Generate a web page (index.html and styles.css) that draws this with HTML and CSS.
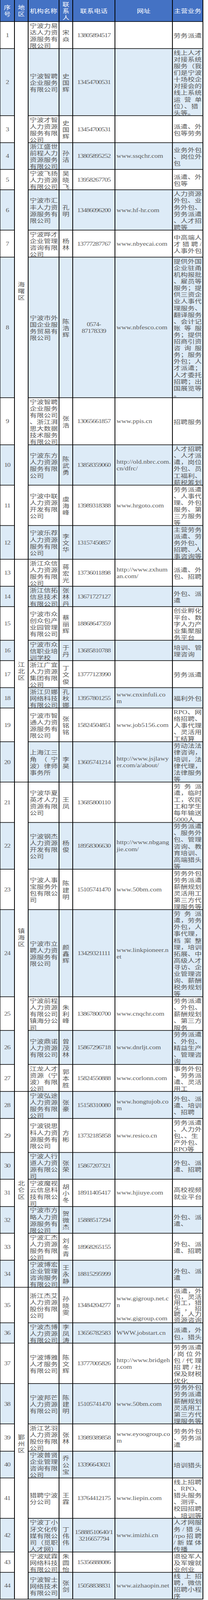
FILE: index.html
```html
<!DOCTYPE html>
<html lang="zh-CN">
<head>
<meta charset="utf-8">
<title>人力资源服务机构名录</title>
<link rel="stylesheet" href="styles.css">
</head>
<body>
<div class="frame">
<div class="sheet">
  <div class="row hd">
    <div class="c"><p>序<br>号</p></div>
    <div class="c"><p>地<br>区</p></div>
    <div class="c"><p>机构名称</p></div>
    <div class="c"><p>联<br>系<br>人</p></div>
    <div class="c"><p>联系电话</p></div>
    <div class="c"><p>网址</p></div>
    <div class="c"><p>主营业务</p></div>
  </div>

  <div class="row">
    <div class="c n"><p>1</p></div>
    <div class="c rg g12"><p>海<br>曙<br>区</p></div>
    <div class="c o"><p>宁波力易<br>达人力资<br>源服务有<br>限公司</p></div>
    <div class="c p"><p>宋<br>焱</p></div>
    <div class="c t"><p>13805894517</p></div>
    <div class="c u"><p></p></div>
    <div class="c b"><p>劳务派遣</p></div>
  </div>
  <div class="row alt">
    <div class="c n"><p>2</p></div>
    <div class="c o"><p>宁波智聘<br>企业服务<br>有限公司</p></div>
    <div class="c p"><p>史<br>国<br>辉</p></div>
    <div class="c t"><p>13454700531</p></div>
    <div class="c u"><p></p></div>
    <div class="c b"><p>线上人才<br>对接系统<br>服务（我<br>们是宁波<br>十场校企<br>对接会的<br>线上系统<span class="j">运营单</span>位）、猎<br>头等。</p></div>
  </div>
  <div class="row">
    <div class="c n"><p>3</p></div>
    <div class="c o"><p>宁波才智<br>人力资源<br>服务有限<br>公司</p></div>
    <div class="c p"><p>史<br>国<br>辉</p></div>
    <div class="c t"><p>13454700531</p></div>
    <div class="c u"><p></p></div>
    <div class="c b"><p>派遣、外<br>包等劳务</p></div>
  </div>
  <div class="row alt">
    <div class="c n"><p>4</p></div>
    <div class="c o"><p>浙江盛世<br>前程人力<br>资源服务<br>有限公司</p></div>
    <div class="c p"><p>孙<br>洁</p></div>
    <div class="c t"><p>13805895252</p></div>
    <div class="c u"><p>www.ssqchr.com</p></div>
    <div class="c b"><p>业务外包<br>、岗位外<br>包</p></div>
  </div>
  <div class="row">
    <div class="c n"><p>5</p></div>
    <div class="c o"><p>宁波飞扬<br>人力资源<br>有限公司</p></div>
    <div class="c p"><p>吴<br>晓<br>飞</p></div>
    <div class="c t"><p>13958267705</p></div>
    <div class="c u"><p></p></div>
    <div class="c b"><p>派遣、外<br>包等</p></div>
  </div>
  <div class="row alt">
    <div class="c n"><p>6</p></div>
    <div class="c o"><p>宁波市汇<br>丰人力资<br>源服务有<br>限公司</p></div>
    <div class="c p"><p>孔<br>明</p></div>
    <div class="c t"><p>13486096200</p></div>
    <div class="c u"><p>www.hf-hr.com</p></div>
    <div class="c b"><p>人力资源<br>外包、业<br>务外包、<br>劳务派遣<br>、人才招<br>聘等</p></div>
  </div>
  <div class="row">
    <div class="c n"><p>7</p></div>
    <div class="c o"><p>宁波晔才<br>企业管理<br>咨询有限<br>公司</p></div>
    <div class="c p"><p>杨<br>林</p></div>
    <div class="c t"><p>13777287767</p></div>
    <div class="c u"><p>www.nbyecai.com</p></div>
    <div class="c b"><p>中高端人<span class="j">才猎聘<span class="lt">/</span></span>人事外包</p></div>
  </div>
  <div class="row alt">
    <div class="c n"><p>8</p></div>
    <div class="c o"><p>宁波市外<br>国企业服<br>务贸易有<br>限公司</p></div>
    <div class="c p"><p>陈<br>浩<br>辉</p></div>
    <div class="c t"><p>0574-<br>87178339</p></div>
    <div class="c u"><p>www.nbfesco.com</p></div>
    <div class="c b"><p>提供外国<br>企业驻甬<br>机构报批<br>、雇员等<br>服务；提<br>供三资企<br>业人事代<br>理服务、<br>翻译服务<br>、会计记<span class="j">账等服</span>务；提供<br>招商引资<span class="j">咨询服</span>务；服务<br>外包；人<br>才派遣；<br>人才委托<br>招聘；出<br>国展览等<br>。</p></div>
  </div>
  <div class="row">
    <div class="c n"><p>9</p></div>
    <div class="c o"><p>宁波智聘<br>企业服务<br>有限公司<br>、浙江湃<br>思大数据<br>技术服务<br>有限公司</p></div>
    <div class="c p"><p>张<br>浩</p></div>
    <div class="c t"><p>13065661857</p></div>
    <div class="c u"><p>www.ppis.cn</p></div>
    <div class="c b"><p>招聘服务</p></div>
  </div>
  <div class="row alt">
    <div class="c n"><p>10</p></div>
    <div class="c o"><p>宁波东方<br>人力资源<br>服务有限<br>公司</p></div>
    <div class="c p"><p>陈<br>武<br>勇</p></div>
    <div class="c t"><p>13858359060</p></div>
    <div class="c u"><p>http://old.nbrc.com.<br>cn/dfrc/</p></div>
    <div class="c b"><p>人才招聘<br>、人才派<br>遣，岗位<br>外包、员<br>工福利、<br>薪税筹划</p></div>
  </div>
  <div class="row">
    <div class="c n"><p>11</p></div>
    <div class="c o"><p>宁波中联<br>人力资源<br>开发有限<br>公司</p></div>
    <div class="c p"><p>虞<br>海<br>峰</p></div>
    <div class="c t"><p>13989318388</p></div>
    <div class="c u"><p>www.hrgoto.com</p></div>
    <div class="c b"><p>劳务派遣<br>、人事代<br>理、外包<br>服务、第<br>三方服务<br>等</p></div>
  </div>
  <div class="row alt">
    <div class="c n"><p>12</p></div>
    <div class="c o"><p>宁波乐荐<br>人力资源<br>服务有限<br>公司</p></div>
    <div class="c p"><p>李<br>文<br>华</p></div>
    <div class="c t"><p>13157450857</p></div>
    <div class="c u"><p></p></div>
    <div class="c b"><p>主营劳务<br>派遣、劳<br>务外包、<br>招聘、人<br>事咨询等</p></div>
  </div>

  <div class="row">
    <div class="c n"><p>13</p></div>
    <div class="c rg g8"><p>江<br>北<br>区</p></div>
    <div class="c o"><p>浙江众信<br>人力资源<br>服务有限<br>公司</p></div>
    <div class="c p"><p>蒋<br>宏<br>光</p></div>
    <div class="c t"><p>13736011898</p></div>
    <div class="c u"><p>http://www.zxhum<br>an.com/</p></div>
    <div class="c b"><p>派遣、外<br>包、招聘</p></div>
  </div>
  <div class="row alt">
    <div class="c n"><p>14</p></div>
    <div class="c o"><p>浙江信拓<br>信息技术<br>有限公司</p></div>
    <div class="c p"><p>张<br>林<br>丹</p></div>
    <div class="c t"><p>13671727127</p></div>
    <div class="c u"><p></p></div>
    <div class="c b"><p>外包、派<br>遣</p></div>
  </div>
  <div class="row">
    <div class="c n"><p>15</p></div>
    <div class="c o"><p>宁波市众<br>创众包产<br>业园管理<br>有限公司</p></div>
    <div class="c p"><p>蔡<br>丽<br>辉</p></div>
    <div class="c t"><p>18868647359</p></div>
    <div class="c u"><p></p></div>
    <div class="c b"><p>创业孵化<br>平台、数<br>字人力产<br>业集聚服<br>务平台</p></div>
  </div>
  <div class="row alt">
    <div class="c n"><p>16</p></div>
    <div class="c o"><p>宁波市众<br>信职业培<br>训学校</p></div>
    <div class="c p"><p>于<br>丹</p></div>
    <div class="c t"><p>13685810788</p></div>
    <div class="c u"><p></p></div>
    <div class="c b"><p>培训、管<br>理咨询</p></div>
  </div>
  <div class="row">
    <div class="c n"><p>17</p></div>
    <div class="c o"><p>浙江广宜<br>人力资源<br>集团有限<br>公司</p></div>
    <div class="c p"><p>丁<br>文<br>俊</p></div>
    <div class="c t"><p>13777123990</p></div>
    <div class="c u"><p></p></div>
    <div class="c b"><p>劳务派遣</p></div>
  </div>
  <div class="row alt">
    <div class="c n"><p>18</p></div>
    <div class="c o"><p>浙江贝娜<br>网络科技<br>有限公司</p></div>
    <div class="c p"><p>孔<br>秋<br>娜</p></div>
    <div class="c t"><p>13957801255</p></div>
    <div class="c u"><p>www.cnxinfuli.co<br>m</p></div>
    <div class="c b"><p>福利外包</p></div>
  </div>
  <div class="row">
    <div class="c n"><p>19</p></div>
    <div class="c o"><p>宁波市智<br>通人力资<br>源服务有<br>限公司</p></div>
    <div class="c p"><p>张<br>铭<br>铭</p></div>
    <div class="c t"><p>15824504851</p></div>
    <div class="c u"><p>www.job5156.com</p></div>
    <div class="c b"><p><span class="j"><span class="lt">RPO</span>、网</span>络招聘、<br>人事代理<br>、灵活用<br>工结算</p></div>
  </div>
  <div class="row alt">
    <div class="c n"><p>20</p></div>
    <div class="c o"><p>上海江三<span class="j">角（宁</span>波）律师<br>事务所</p></div>
    <div class="c p"><p>李<br>昊</p></div>
    <div class="c t"><p>13605741214</p></div>
    <div class="c u"><p>http://www.jsjlawy<br>er.com/a/about/</p></div>
    <div class="c b"><p>劳动法法<br>律咨询，<br>培训，法<br>律代理，<br>法律服务<br>等</p></div>
  </div>

  <div class="row">
    <div class="c n"><p>21</p></div>
    <div class="c rg g7"><p>镇<br>海<br>区</p></div>
    <div class="c o"><p>宁波华夏<br>英才人力<br>资源有限<br>公司</p></div>
    <div class="c p"><p>王<br>凤</p></div>
    <div class="c t"><p>13685800110</p></div>
    <div class="c u"><p></p></div>
    <div class="c b"><p><span class="j">劳务派</span>遣，临时<br>工，农民<br>工和学生<br>每年输送<br><span class="lt">5000</span>人</p></div>
  </div>
  <div class="row alt">
    <div class="c n"><p>22</p></div>
    <div class="c o"><p>宁波钢杰<br>人力资源<br>开发有限<br>公司</p></div>
    <div class="c p"><p>杨<br>俊</p></div>
    <div class="c t"><p>18958306630</p></div>
    <div class="c u"><p>http://www.nbgang<br>jie.com/</p></div>
    <div class="c b"><p>劳务派遣<br>、服务外<br>包、管理<br>咨询、教<br>育培训、<br>高端猎头<br>等</p></div>
  </div>
  <div class="row">
    <div class="c n"><p>23</p></div>
    <div class="c o"><p>宁波人事<br>宝服务外<br>包有限公<br>司</p></div>
    <div class="c p"><p>陈<br>建<br>明</p></div>
    <div class="c t"><p>15105741470</p></div>
    <div class="c u"><p>www.50bm.com</p></div>
    <div class="c b"><p>劳务外包<br>劳务派遣<br>薪酬规划<br>灵活用工<br>第三方代<br>理服务等</p></div>
  </div>
  <div class="row alt">
    <div class="c n"><p>24</p></div>
    <div class="c o"><p>宁波市立<br>聘人力资<br>源服务有<br>限公司</p></div>
    <div class="c p"><p>颜<br>鑫<br>辉</p></div>
    <div class="c t"><p>13429321111</p></div>
    <div class="c u"><p>www.linkpioneer.n<br>et</p></div>
    <div class="c b"><p><span class="j">劳务派</span>遣，劳务<br>外包，人<br>事代理，<span class="j">档案整</span>理，培训<br>拓展、中<br>高级人才<br>寻访、企<br>业管理咨<br>询、薪酬<br>税务规划<br>等</p></div>
  </div>
  <div class="row">
    <div class="c n"><p>25</p></div>
    <div class="c o"><p>宁波前程<br>人力资源<br>有限公司<br>镇海分公<br>司</p></div>
    <div class="c p"><p>朱<br>利<br>峰</p></div>
    <div class="c t"><p>13867800700</p></div>
    <div class="c u"><p>www.cnqchr.com</p></div>
    <div class="c b"><p>劳务派遣<br>、外包、<br>薪酬规划<br>、第三方<br>服务</p></div>
  </div>
  <div class="row alt">
    <div class="c n"><p>26</p></div>
    <div class="c o"><p>宁波鼎诺<br>人力资源<br>有限公司</p></div>
    <div class="c p"><p>曾<br>茂<br>林</p></div>
    <div class="c t"><p>15867296718</p></div>
    <div class="c u"><p>www.dnrljt.com</p></div>
    <div class="c b"><p>劳务派遣<br>、外包、<br>精益生产<br>、管理咨<br>询</p></div>
  </div>
  <div class="row">
    <div class="c n"><p>27</p></div>
    <div class="c o"><p>江龙人才<br>资源（宁<br>波）有限<br>公司</p></div>
    <div class="c p"><p>郭<br>本<br>胜</p></div>
    <div class="c t"><p>15824550888</p></div>
    <div class="c u"><p>www.corlonn.com</p></div>
    <div class="c b"><p>事务外包<br>、劳务派<br>遣、灵活<br>用工</p></div>
  </div>

  <div class="row alt">
    <div class="c n"><p>28</p></div>
    <div class="c rg g7"><p>北<br>仑<br>区</p></div>
    <div class="c o"><p>宁波弘途<br>人力资源<br>服务有限<br>公司</p></div>
    <div class="c p"><p>张<br>豪</p></div>
    <div class="c t"><p>15158310080</p></div>
    <div class="c u"><p>www.hongtujob.co<br>m</p></div>
    <div class="c b"><p>外包、派<br>遣、培训<br>、招聘</p></div>
  </div>
  <div class="row">
    <div class="c n"><p>29</p></div>
    <div class="c o"><p>宁波锐思<br>科人力资<br>源服务有<br>限公司</p></div>
    <div class="c p"><p>方<br>彬</p></div>
    <div class="c t"><p>13732185858</p></div>
    <div class="c u"><p>www.resico.cn</p></div>
    <div class="c b"><p>劳务派遣<br>、人力外<br>包、、生<br>产外包、<br><span class="lt">RPO</span>等</p></div>
  </div>
  <div class="row alt">
    <div class="c n"><p>30</p></div>
    <div class="c o"><p>宁波人行<br>道人力资<br>源有限公<br>司</p></div>
    <div class="c p"><p>张<br>荣</p></div>
    <div class="c t"><p>15867207321</p></div>
    <div class="c u"><p></p></div>
    <div class="c b"><p>外包、派<br>遣、招聘</p></div>
  </div>
  <div class="row">
    <div class="c n"><p>31</p></div>
    <div class="c o"><p>宁波魔视<br>云信息科<br>技有限公<br>司</p></div>
    <div class="c p"><p>胡<br>小<br>冬</p></div>
    <div class="c t"><p>18911405417</p></div>
    <div class="c u"><p>www.hjiuye.com</p></div>
    <div class="c b"><p>高校视频<br>就业平台</p></div>
  </div>
  <div class="row alt">
    <div class="c n"><p>32</p></div>
    <div class="c o"><p>宁波市方<br>略人力资<br>源服务有<br>限公司</p></div>
    <div class="c p"><p>贺<br>微<br>杰</p></div>
    <div class="c t"><p>15888517294</p></div>
    <div class="c u"><p></p></div>
    <div class="c b"><p>外包、派<br>遣、</p></div>
  </div>
  <div class="row">
    <div class="c n"><p>33</p></div>
    <div class="c o"><p>宁波汇杰<br>人力资源<br>服务有限<br>公司</p></div>
    <div class="c p"><p>刘<br>冬<br>青</p></div>
    <div class="c t"><p>18968265155</p></div>
    <div class="c u"><p></p></div>
    <div class="c b"><p>外包、派<br>遣、招聘</p></div>
  </div>
  <div class="row alt">
    <div class="c n"><p>34</p></div>
    <div class="c o"><p>宁波博宏<br>企业管理<br>咨询服务<br>有限公司</p></div>
    <div class="c p"><p>王<br>永<br>静</p></div>
    <div class="c t"><p>18815295999</p></div>
    <div class="c u"><p></p></div>
    <div class="c b"><p>外包、派<br>遣</p></div>
  </div>

  <div class="row">
    <div class="c n"><p>35</p></div>
    <div class="c rg g10"><p>鄞<br>州<br>区</p></div>
    <div class="c o"><p>浙江杰艾<br>人力资源<br>股份有限<br>公司</p></div>
    <div class="c p"><p>孙<br>晓<br>雯</p></div>
    <div class="c t"><p>13484204277</p></div>
    <div class="c u"><p><br>www.gigroup.net.c<br>n<br><br>www.gigroup.com</p></div>
    <div class="c b tight"><p>派遣，外<br>包，灵活<br>用工，猎<span class="j">头，招</span>聘，人力<br>资源咨询</p></div>
  </div>
  <div class="row alt">
    <div class="c n"><p>36</p></div>
    <div class="c o"><p>宁波杰博<br>人力资源<br>有限公司</p></div>
    <div class="c p"><p>李<br>凤<br>涛</p></div>
    <div class="c t"><p>13656782583</p></div>
    <div class="c u"><p>WWW.jobstart.cn</p></div>
    <div class="c b"><p>派遣，外<br>包，猎头</p></div>
  </div>
  <div class="row">
    <div class="c n"><p>37</p></div>
    <div class="c o"><p>宁波博雅<br>人才服务<br>有限公司</p></div>
    <div class="c p"><p>陈<br>文<br>辉</p></div>
    <div class="c t"><p>13777005826</p></div>
    <div class="c u"><p>http://www.bridgeh<br>r.com</p></div>
    <div class="c b"><p>劳务派遣<span class="j"><span class="lt">/</span>岗位外</span><span class="j">包<span class="lt">/</span>代理</span><span class="j">招聘<span class="lt">/</span>社</span>保及财税<br>优化</p></div>
  </div>
  <div class="row alt">
    <div class="c n"><p>38</p></div>
    <div class="c o"><p>宁波邦芒<br>人力资源<br>有限公司</p></div>
    <div class="c p"><p>陈<br>建<br>明</p></div>
    <div class="c t"><p>15105741470</p></div>
    <div class="c u"><p>www.50bm.com</p></div>
    <div class="c b"><p>劳务外包<br>劳务派遣<br>薪酬规划<br>灵活用工<br>第三方代<br>理服务等</p></div>
  </div>
  <div class="row">
    <div class="c n"><p>39</p></div>
    <div class="c o"><p>浙江艺羽<br>人力资源<br>股份有限<br>公司</p></div>
    <div class="c p"><p>张<br>林</p></div>
    <div class="c t"><p>13989389858</p></div>
    <div class="c u"><p>www.eyoogroup.co<br>m</p></div>
    <div class="c b"><p>劳务外包<br>、劳务派<br>遣</p></div>
  </div>
  <div class="row alt">
    <div class="c n"><p>40</p></div>
    <div class="c o"><p>宁波普贤<br>企业管理<br>咨询有限<br>公司</p></div>
    <div class="c p"><p>乔<br>公<br>宝</p></div>
    <div class="c t"><p>13396643021</p></div>
    <div class="c u"><p></p></div>
    <div class="c b"><p>培训猎头</p></div>
  </div>
  <div class="row">
    <div class="c n"><p>41</p></div>
    <div class="c o"><p>猎聘宁波<br>分公司</p></div>
    <div class="c p"><p>王<br>霖</p></div>
    <div class="c t"><p>13764412175</p></div>
    <div class="c u"><p>www.liepin.com</p></div>
    <div class="c b"><p>线上招聘<br>、<span class="lt">RPO</span>、<br>猎头服务<br>、测评、<br>校园招聘<br>、培训等</p></div>
  </div>
  <div class="row alt">
    <div class="c n"><p>42</p></div>
    <div class="c o"><p>宁波丁小<br>牙文化传<br>媒有限公<br>司（觅职<br>人才网）</p></div>
    <div class="c p"><p>丁<br>伟<br>伟</p></div>
    <div class="c t"><p>15888510640/1<br>3216657794</p></div>
    <div class="c u"><p>www.imizhi.cn</p></div>
    <div class="c b"><p>人才网服<span class="j">务<span class="lt">/</span>猎头</span><span class="j"><span class="lt">/rpo</span>招聘</span><span class="j"><span class="lt">/</span>新媒体</span>传播</p></div>
  </div>
  <div class="row">
    <div class="c n"><p>43</p></div>
    <div class="c o"><p>宁波斌霖<br>网络科技<br>有限公司</p></div>
    <div class="c p"><p>朱<br>圆<br>怡</p></div>
    <div class="c t"><p>15356888086</p></div>
    <div class="c u"><p></p></div>
    <div class="c b"><p>退役军人<br>及军嫂就<br>业创业</p></div>
  </div>
  <div class="row alt">
    <div class="c n"><p>44</p></div>
    <div class="c o"><p>宁波智士<br>网络技术<br>有限公司</p></div>
    <div class="c p"><p>张<br>剑</p></div>
    <div class="c t"><p>15058838831</p></div>
    <div class="c u"><p>www.aizhaopin.net</p></div>
    <div class="c b"><p><span class="j">线上招</span>聘，微信<br>招聘小程<br>序</p></div>
  </div>
</div>
</div>
</body>
</html>
```

FILE: styles.css
```css
html, body {
  margin: 0;
  padding: 0;
  background: #ffffff;
}

/* The browser window is 4096px tall; the 5270px sheet is fitted into it. */
.frame {
  height: 4096px;
  overflow: hidden;
}

.sheet {
  display: grid;
  width: max-content;
  grid-template-columns: 35px 33px 77px 33px 106px 145px 76px;
  grid-template-rows:
    70px
    87px 219px 87px 86px 65px 131px 87px 461px 153px 131px
    131px 109px 87px 65px 109px 65px 87px 65px 109px 131px
    131px 152px 131px 285px 109px 110px 87px 87px 110px 86px
    88px 86px 87px 87px 115px 65px 131px 131px 88px 86px
    131px 109px 65px 86px;
  gap: 2px;
  padding: 0 2px 2px 1px;
  background: #000000;
  font-family: "Noto Sans CJK SC", sans-serif;
  font-size: 18px;
  line-height: 22px;
  color: #595959;
  transform: scaleY(0.77723);
  transform-origin: 0 0;
}

.row {
  display: contents;
}

.c {
  background: #ffffff;
  display: flex;
  flex-direction: column;
  justify-content: center;
  min-width: 0;
  min-height: 0;
  white-space: nowrap;
}

.c > p {
  margin: 0;
  flex-shrink: 0;
}

.alt > .c {
  background: #ddebf7;
}

.alt > .rg {
  background: #ffffff;
}

.hd > .c {
  background: #4472c4;
  color: #ffffff;
  text-align: center;
  font-size: 17.5px;
}

.n,
.t {
  text-align: center;
  font-family: "Liberation Serif", serif;
  font-size: 17.5px;
  letter-spacing: -1px;
}

.rg {
  text-align: center;
}

.g12 { grid-row: span 12; }
.g10 { grid-row: span 10; }
.g8 { grid-row: span 8; }
.g7 { grid-row: span 7; }

.o {
  padding: 0 2px 0 3px;
}

.p {
  text-align: center;
}

.u {
  padding-left: 3px;
  font-family: "Liberation Serif", serif;
  font-size: 17.5px;
}

.b {
  padding: 0 2px;
}

.tight > p {
  line-height: 19px;
}

.lt {
  font-family: "Liberation Serif", serif;
  line-height: 1;
}

.j {
  display: block;
  white-space: normal;
  text-align: justify;
  text-align-last: justify;
}
```
